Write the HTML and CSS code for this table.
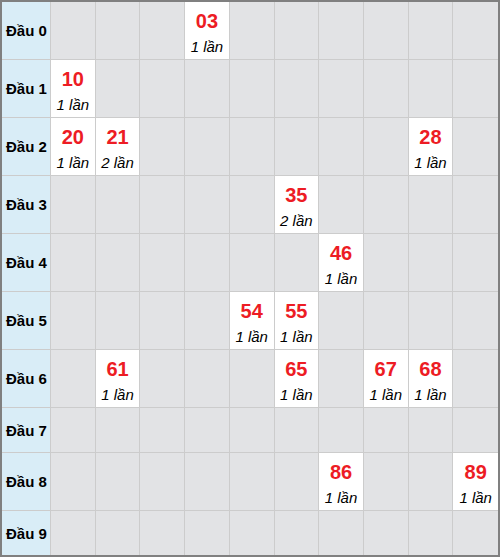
FILE: index.html
```html
<!DOCTYPE html>
<html lang="vi">
<head>
<meta charset="utf-8">
<link rel="stylesheet" href="styles.css">
</head>
<body>
<div class="board">
  <div class="row data">
    <div class="head">Đầu 0</div>
    <div class="cell"></div><div class="cell"></div><div class="cell"></div>
    <div class="cell hit"><b>03</b><i>1 lần</i></div>
    <div class="cell"></div><div class="cell"></div><div class="cell"></div><div class="cell"></div><div class="cell"></div><div class="cell"></div>
  </div>
  <div class="row data">
    <div class="head">Đầu 1</div>
    <div class="cell hit"><b>10</b><i>1 lần</i></div>
    <div class="cell"></div><div class="cell"></div><div class="cell"></div><div class="cell"></div><div class="cell"></div><div class="cell"></div><div class="cell"></div><div class="cell"></div><div class="cell"></div>
  </div>
  <div class="row data">
    <div class="head">Đầu 2</div>
    <div class="cell hit"><b>20</b><i>1 lần</i></div>
    <div class="cell hit"><b>21</b><i>2 lần</i></div>
    <div class="cell"></div><div class="cell"></div><div class="cell"></div><div class="cell"></div><div class="cell"></div><div class="cell"></div>
    <div class="cell hit"><b>28</b><i>1 lần</i></div>
    <div class="cell"></div>
  </div>
  <div class="row data">
    <div class="head">Đầu 3</div>
    <div class="cell"></div><div class="cell"></div><div class="cell"></div><div class="cell"></div><div class="cell"></div>
    <div class="cell hit"><b>35</b><i>2 lần</i></div>
    <div class="cell"></div><div class="cell"></div><div class="cell"></div><div class="cell"></div>
  </div>
  <div class="row data">
    <div class="head">Đầu 4</div>
    <div class="cell"></div><div class="cell"></div><div class="cell"></div><div class="cell"></div><div class="cell"></div><div class="cell"></div>
    <div class="cell hit"><b>46</b><i>1 lần</i></div>
    <div class="cell"></div><div class="cell"></div><div class="cell"></div>
  </div>
  <div class="row data">
    <div class="head">Đầu 5</div>
    <div class="cell"></div><div class="cell"></div><div class="cell"></div><div class="cell"></div>
    <div class="cell hit"><b>54</b><i>1 lần</i></div>
    <div class="cell hit"><b>55</b><i>1 lần</i></div>
    <div class="cell"></div><div class="cell"></div><div class="cell"></div><div class="cell"></div>
  </div>
  <div class="row data">
    <div class="head">Đầu 6</div>
    <div class="cell"></div>
    <div class="cell hit"><b>61</b><i>1 lần</i></div>
    <div class="cell"></div><div class="cell"></div><div class="cell"></div>
    <div class="cell hit"><b>65</b><i>1 lần</i></div>
    <div class="cell"></div>
    <div class="cell hit"><b>67</b><i>1 lần</i></div>
    <div class="cell hit"><b>68</b><i>1 lần</i></div>
    <div class="cell"></div>
  </div>
  <div class="row empty">
    <div class="head">Đầu 7</div>
    <div class="cell"></div><div class="cell"></div><div class="cell"></div><div class="cell"></div><div class="cell"></div><div class="cell"></div><div class="cell"></div><div class="cell"></div><div class="cell"></div><div class="cell"></div>
  </div>
  <div class="row data">
    <div class="head">Đầu 8</div>
    <div class="cell"></div><div class="cell"></div><div class="cell"></div><div class="cell"></div><div class="cell"></div><div class="cell"></div>
    <div class="cell hit"><b>86</b><i>1 lần</i></div>
    <div class="cell"></div><div class="cell"></div>
    <div class="cell hit"><b>89</b><i>1 lần</i></div>
  </div>
  <div class="row empty last">
    <div class="head">Đầu 9</div>
    <div class="cell"></div><div class="cell"></div><div class="cell"></div><div class="cell"></div><div class="cell"></div><div class="cell"></div><div class="cell"></div><div class="cell"></div><div class="cell"></div><div class="cell"></div>
  </div>
</div>
</body>
</html>
```

FILE: styles.css
```css
html, body {
  margin: 0;
  padding: 0;
  background: #ffffff;
}

body {
  font-family: "Liberation Sans", Arial, sans-serif;
  color: #000;
}

.board {
  width: 500px;
  height: 557px;
  box-sizing: border-box;
  border: 2px solid #808080;
  display: flex;
  flex-direction: column;
}

.row {
  display: grid;
  grid-template-columns: 49px repeat(10, 1fr);
  border-bottom: 1px solid #cccccc;
}

.row.data { height: 57px; }
.row.empty { height: 44px; }
.row.last { border-bottom: 0; }

.head {
  background: #d9edf7;
  border-right: 1px solid #cccccc;
  display: flex;
  align-items: center;
  padding-left: 4px;
  font-weight: bold;
  font-size: 15px;
}

.cell {
  background: #e2e3e5;
  border-right: 1px solid #cccccc;
  display: flex;
  flex-direction: column;
  align-items: center;
  justify-content: flex-start;
  padding-top: 7px;
}

.cell:last-child { border-right: 0; }

.cell.hit { background: #ffffff; }

.cell b {
  color: #ed1c24;
  font-size: 20px;
  line-height: 24px;
  font-weight: bold;
}

.cell i {
  font-size: 15px;
  line-height: 17px;
  margin-top: 5px;
  font-style: italic;
}
```
